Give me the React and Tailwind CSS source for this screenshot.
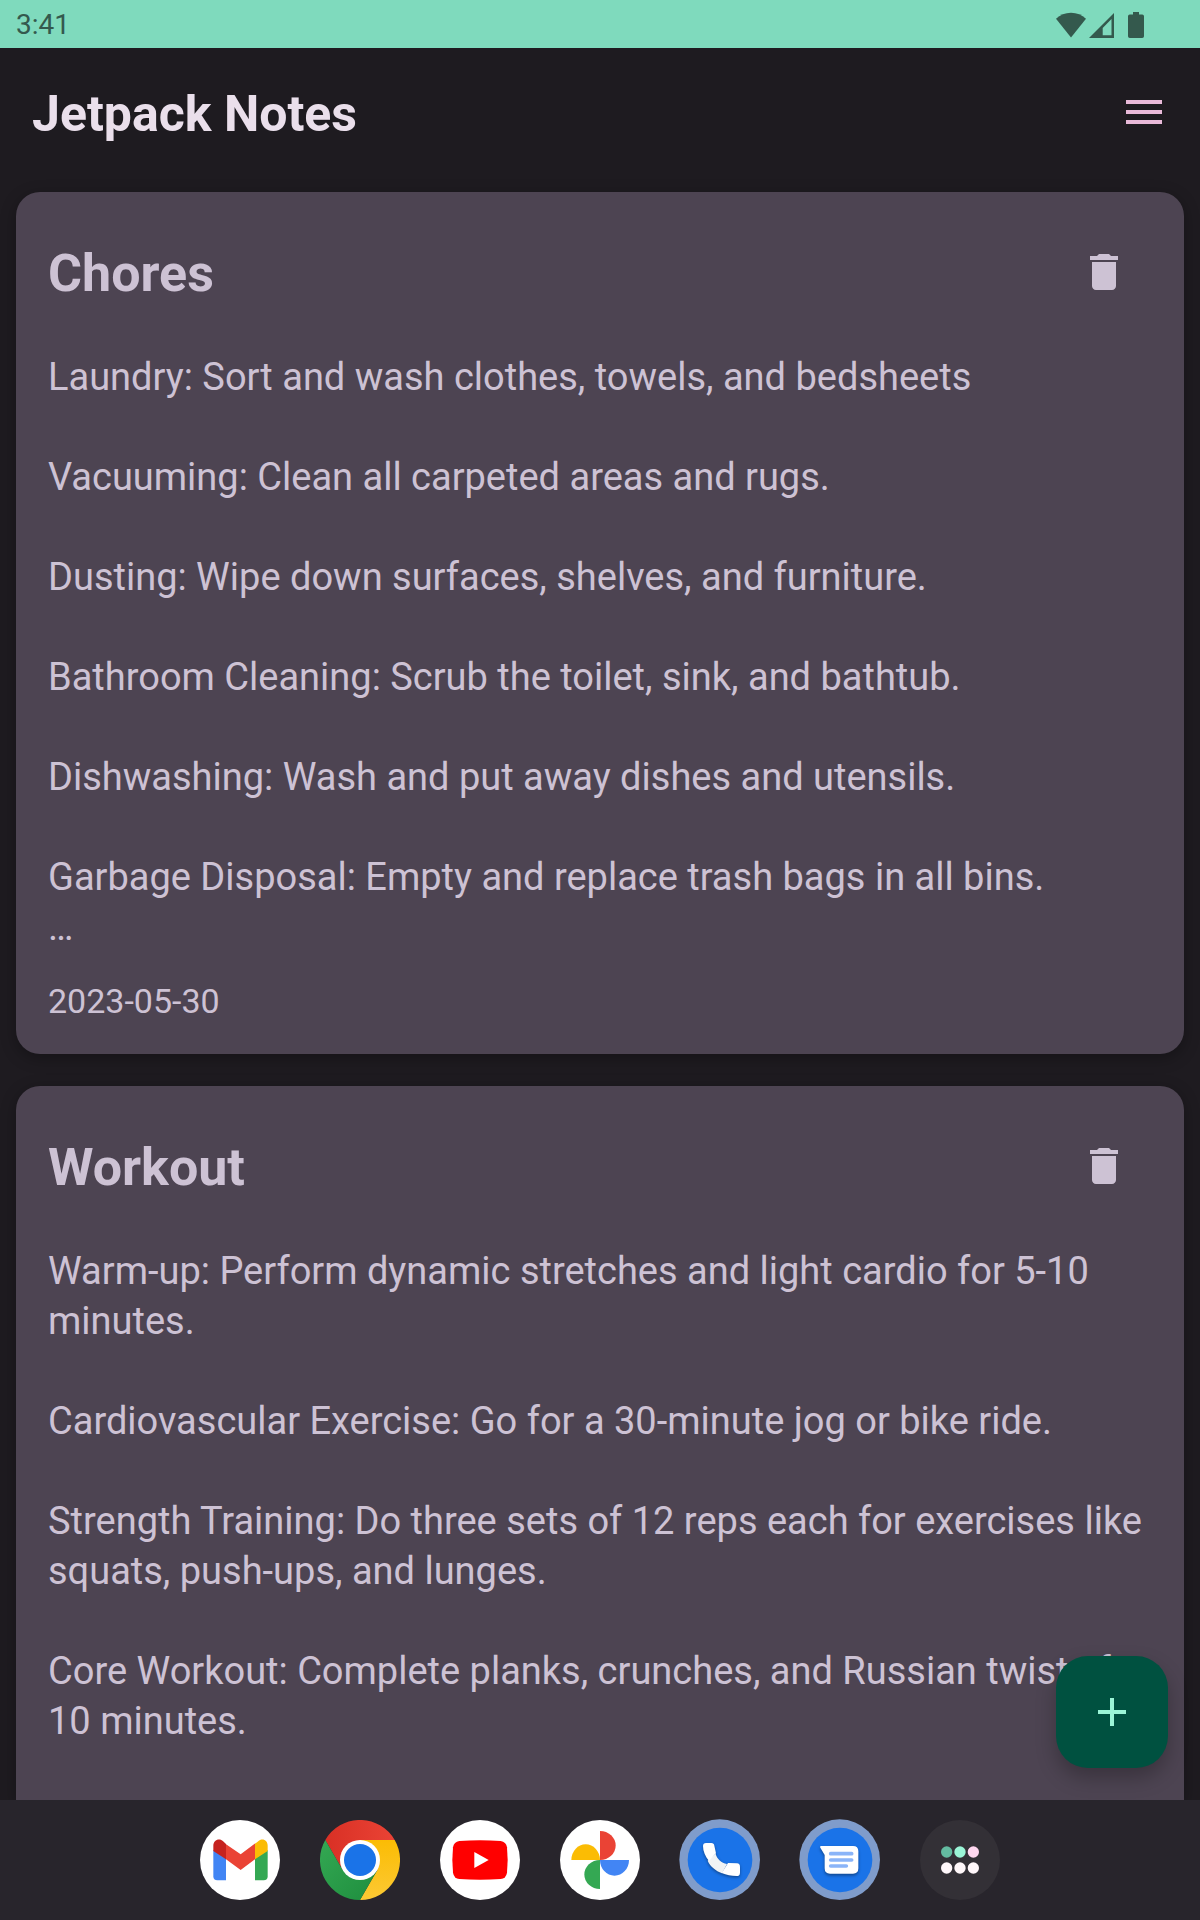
import React from "react";

const notes = [
  {
    title: "Chores",
    date: "2023-05-30",
    lines: [
      "Laundry: Sort and wash clothes, towels, and bedsheets",
      "Vacuuming: Clean all carpeted areas and rugs.",
      "Dusting: Wipe down surfaces, shelves, and furniture.",
      "Bathroom Cleaning: Scrub the toilet, sink, and bathtub.",
      "Dishwashing: Wash and put away dishes and utensils.",
      "Garbage Disposal: Empty and replace trash bags in all bins.\n…",
    ],
  },
  {
    title: "Workout",
    lines: [
      "Warm-up: Perform dynamic stretches and light cardio for 5-10 minutes.",
      "Cardiovascular Exercise: Go for a 30-minute jog or bike ride.",
      "Strength Training: Do three sets of 12 reps each for exercises like squats, push-ups, and lunges.",
      "Core Workout: Complete planks, crunches, and Russian twists for 10 minutes.",
    ],
  },
];

function StatusBar() {
  return (
    <div className="flex h-12 shrink-0 items-center justify-between bg-[#7fdabd] pt-0.5 pr-14 pl-4 text-[#34594d]">
      <time className="text-[28px] leading-8">3:41</time>
      <div className="flex items-center" aria-hidden="true">
        <svg className="h-[26px] w-[30px]" viewBox="0 0 30 26" fill="currentColor">
          <path d="M15 25.500 0 6.800C4 3 9.200 .8 15 .8S26 3 30 6.800Z" />
        </svg>
        <svg className="ml-[3px] h-[26px] w-[25px]" viewBox="0 0 25 26" fill="currentColor" fillRule="evenodd">
          <path d="M25 1v25H0ZM22.500 7 13.700 16V23.200h8.800Z" />
        </svg>
        <svg className="ml-3.5 h-[26px] w-4" viewBox="0 0 16 26" fill="currentColor">
          <path d="M5 0h6v2.500h3.200A1.800 1.800 0 0 1 16 4.300v19.900a1.800 1.800 0 0 1-1.800 1.800H1.800A1.800 1.800 0 0 1 0 24.200V4.300a1.800 1.800 0 0 1 1.800-1.800H5Z" />
        </svg>
      </div>
    </div>
  );
}

function Note({ note }) {
  return (
    <article className="shrink-0 rounded-3xl bg-[#4d4452] px-8 pt-8 pb-7 text-[#cdc2d4] shadow-[0_4px_16px_rgba(0,0,0,0.3)] last:grow last:rounded-b-none">
      <div className="flex items-start justify-between">
        <h2 className="text-[52px] leading-[100px] font-bold">{note.title}</h2>
        <button type="button" aria-label={`Delete ${note.title}`} className="flex size-24 items-center justify-center">
          <svg className="size-12" viewBox="0 0 24 24" fill="currentColor">
            <path d="M6 19c0 1.100.9 2 2 2h8c1.100 0 2-.9 2-2V7H6v12ZM19 4h-3.500l-1-1h-5l-1 1H5v2h14V4Z" />
          </svg>
        </button>
      </div>
      <p className="mt-7 text-[38px] leading-[50px] whitespace-pre-line">{note.lines.join("\n\n")}</p>
      {note.date && (
        <p className="mt-6 text-[34px] leading-[50px]">
          <time dateTime={note.date}>{note.date}</time>
        </p>
      )}
    </article>
  );
}

function Gmail() {
  return (
    <svg className="size-20" viewBox="60 90 240 240">
      <circle cx="180" cy="210" r="120" fill="#fff" />
      <path d="M100 180 138 205V271H112Q100 271 100 259Z" fill="#4285f4" />
      <path d="M263 180 225 205V271H251Q263 271 263 259Z" fill="#34a853" />
      <path d="M137 162 182 193 226 160V207L182 240 137 207Z" fill="#ea4335" />
      <path d="M100 183V167C100 151 117 142 131 155L138 162V208Z" fill="#c5221f" />
      <path d="M263 183V167C263 151 247 142 233 155L225 161V208Z" fill="#fbbc04" />
    </svg>
  );
}

function Chrome() {
  return (
    <svg className="size-20" viewBox="420 90 240 240">
      <defs>
        <linearGradient id="chromeRed" x1="0" x2="1">
          <stop offset="0" stopColor="#d93025" />
          <stop offset="1" stopColor="#ea4335" />
        </linearGradient>
        <linearGradient id="chromeGreen" x1="1" y1="1" x2="0" y2="0">
          <stop offset="0" stopColor="#1e8e3e" />
          <stop offset="1" stopColor="#34a853" />
        </linearGradient>
        <linearGradient id="chromeYellow" x1="0" y1="1" x2="0" y2="0">
          <stop offset="0" stopColor="#fcc934" />
          <stop offset="1" stopColor="#fbbc04" />
        </linearGradient>
      </defs>
      <path d="M436 150A120 120 0 0 1 644 150H540V210L488 240Z" fill="url(#chromeRed)" />
      <path d="M540 150H644A120 120 0 0 1 540 330L592 240 540 210Z" fill="url(#chromeYellow)" />
      <path d="M436 150A120 120 0 0 0 540 330L592 240 540 210 488 240Z" fill="url(#chromeGreen)" />
      <circle cx="540" cy="210" r="60" fill="#fff" />
      <circle cx="540" cy="210" r="48" fill="#1a73e8" />
    </svg>
  );
}

function YouTube() {
  return (
    <svg className="size-20" viewBox="780 90 240 240">
      <circle cx="900" cy="210" r="120" fill="#fff" />
      <path d="M838 153Q900 149 962 153 978 155 981 172 985 210 981 248 978 265 962 267 900 271 838 267 822 265 819 248 815 210 819 172 822 155 838 153Z" fill="#f00" />
      <path d="M883 186 926 210 883 234Z" fill="#fff" />
    </svg>
  );
}

function Photos() {
  return (
    <svg className="size-20" viewBox="240 90 240 240">
      <circle cx="360" cy="210" r="120" fill="#fff" />
      <path d="M360 123A47 43.500 0 0 1 360 210Z" fill="#ea4335" />
      <path d="M274 210A43 47 0 0 1 360 210Z" fill="#fbbc04" />
      <path d="M360 210A43.500 47 0 0 0 447 210Z" fill="#4285f4" />
      <path d="M360 210A47 43.500 0 0 0 360 297Z" fill="#34a853" />
    </svg>
  );
}

function Phone() {
  return (
    <svg className="size-20 overflow-visible" viewBox="600 90 240 240">
      <circle cx="719" cy="209" r="121" fill="#7f9ccb" />
      <circle cx="720" cy="210" r="97" fill="#1a73e8" />
      <g className="drop-shadow-[0_4px_4px_rgba(0,0,0,0.4)]">
        <path d="M683 212 707 191C711 207 724 219 741 222L726 250C707 242 691 230 683 212Z" fill="#f1f3f4" />
        <path d="M678 159H694Q702 159 703 167L708 190 687 213C676 200 669 184 669 168Q669 159 678 159Z" fill="#fff" />
        <path d="M744 219 771 220Q780 221 780 230V248Q780 258 770 258C754 258 739 255 725 249Z" fill="#fff" />
      </g>
    </svg>
  );
}

function Messages() {
  return (
    <svg className="size-20 overflow-visible" viewBox="60 90 240 240">
      <circle cx="179" cy="209" r="121" fill="#7f9ccb" />
      <circle cx="180" cy="210" r="97" fill="#1a73e8" />
      <path className="drop-shadow-[0_5px_4px_rgba(0,0,0,0.4)]" d="M123 168H219Q235 168 235 184V235Q235 251 219 251H150Q134 251 134 235V195L121 173Q119 168 123 168Z" fill="#fff" />
      <path d="M152 191H215M152 210H215M152 228H199" stroke="#8ab4f8" strokeWidth="11" strokeLinecap="round" />
    </svg>
  );
}

function AllApps() {
  return (
    <svg className="size-20" viewBox="420 90 240 240">
      <circle cx="540" cy="210" r="120" fill="#333036" />
      <circle cx="500" cy="186" r="17" fill="#64bba1" />
      <circle cx="540" cy="186" r="17" fill="#9bf5d7" />
      <circle cx="580" cy="186" r="17" fill="#ffd7f0" />
      <circle cx="500" cy="234" r="17" fill="#fff7fa" />
      <circle cx="540" cy="234" r="17" fill="#fff7fa" />
      <circle cx="580" cy="234" r="17" fill="#fff7fa" />
    </svg>
  );
}

const dock = [
  ["Gmail", Gmail],
  ["Chrome", Chrome],
  ["YouTube", YouTube],
  ["Photos", Photos],
  ["Phone", Phone],
  ["Messages", Messages],
  ["All apps", AllApps],
];

export default function App() {
  return (
    <div className="flex h-screen flex-col overflow-hidden bg-[#1e1b20] font-['Roboto',sans-serif]">
      <StatusBar />
      <div className="relative flex min-h-0 flex-1 flex-col">
        <header className="flex h-32 shrink-0 items-center justify-between pr-2 pl-8">
          <h1 className="pt-1 text-[50px] leading-[60px] font-bold text-[#eadfeb]">Jetpack Notes</h1>
          <button type="button" aria-label="Menu" className="flex size-24 items-center justify-center text-[#e8b9d8]">
            <svg className="size-12" viewBox="0 0 24 24" fill="currentColor">
              <path d="M3 18h18v-2H3v2ZM3 13h18v-2H3v2ZM3 6v2h18V6Z" />
            </svg>
          </button>
        </header>
        <main className="flex min-h-0 flex-1 flex-col gap-8 overflow-y-auto px-4 pt-4">
          {notes.map((note) => (
            <Note key={note.title} note={note} />
          ))}
        </main>
        <button
          type="button"
          aria-label="Add note"
          className="absolute right-8 bottom-8 flex size-28 items-center justify-center rounded-[32px] bg-[#005140] text-[#9bf5d7] shadow-[0_10px_20px_rgba(0,0,0,0.25)]"
        >
          <svg className="size-12" viewBox="0 0 24 24" fill="currentColor">
            <path d="M19 13h-6v6h-2v-6H5v-2h6V5h2v6h6v2Z" />
          </svg>
        </button>
      </div>
      <nav aria-label="Apps" className="z-10 flex h-30 shrink-0 items-center justify-center gap-10 bg-[#28252c]">
        {dock.map(([name, Icon]) => (
          <button key={name} type="button" aria-label={name} className="size-20 rounded-full">
            <Icon />
          </button>
        ))}
      </nav>
    </div>
  );
}
